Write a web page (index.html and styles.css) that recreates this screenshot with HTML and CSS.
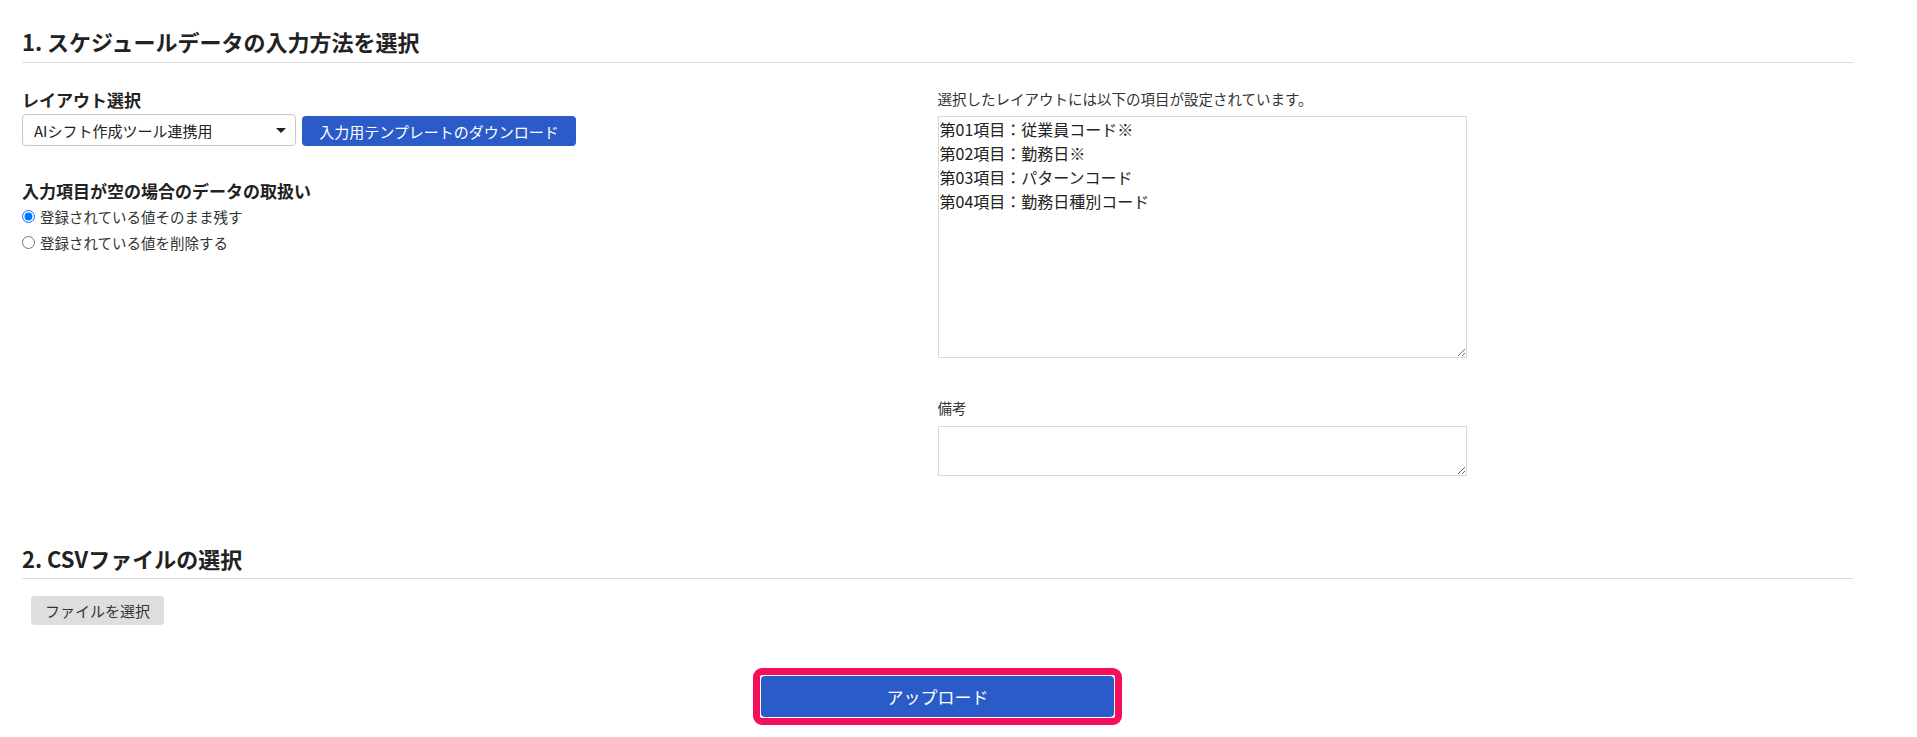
FILE: index.html
```html
<!DOCTYPE html>
<html lang="ja">
<head>
  <meta charset="UTF-8">
  <meta name="viewport" content="width=device-width, initial-scale=1.0">
  <title>スケジュールデータ取込</title>
  <link rel="stylesheet" href="styles.css">
</head>
<body>
  <main class="page">
    <h2 class="section-title">1. スケジュールデータの入力方法を選択</h2>
    <div class="cols">
      <div class="col">
        <div class="field-label">レイアウト選択</div>
        <div class="select-row">
          <div class="select-wrap">
            <select id="layout">
              <option>AIシフト作成ツール連携用</option>
            </select>
          </div>
          <button type="button" class="btn-blue btn-template">入力用テンプレートのダウンロード</button>
        </div>
        <div class="field-label sub-label">入力項目が空の場合のデータの取扱い</div>
        <label class="radio-row"><input type="radio" name="empty" checked>登録されている値そのまま残す</label>
        <label class="radio-row"><input type="radio" name="empty">登録されている値を削除する</label>
      </div>
      <div class="col">
        <div class="note">選択したレイアウトには以下の項目が設定されています。</div>
        <textarea class="items" readonly>第01項目：従業員コード※
第02項目：勤務日※
第03項目：パターンコード
第04項目：勤務日種別コード</textarea>
        <div class="note remarks-label">備考</div>
        <textarea class="remarks"></textarea>
      </div>
    </div>

    <h2 class="section-title second">2. CSVファイルの選択</h2>
    <label class="file-btn">ファイルを選択<input type="file" hidden></label>

    <div class="upload-row">
      <div class="highlight">
        <button type="button" class="btn-blue btn-upload">アップロード</button>
      </div>
    </div>
  </main>
</body>
</html>
```

FILE: styles.css
```css
body {
  margin: 0;
  font-family: "Noto Sans CJK JP", "Liberation Sans", sans-serif;
  color: #333;
  background-color: #fff;
}
.page {
  margin: 0 64px 0 22px;
  padding-top: 26px;
}
.section-title {
  margin: 0;
  font-size: 22px;
  line-height: 30px;
  font-weight: bold;
  color: #222;
  padding-bottom: 6px;
  border-bottom: 1px solid #ddd;
}
.section-title.second {
  margin-top: 67px;
  padding-bottom: 5px;
}
.cols {
  display: grid;
  grid-template-columns: 1fr 1fr;
  margin-top: 26px;
}
.field-label {
  font-size: 17px;
  line-height: 22px;
  font-weight: bold;
  color: #222;
  margin-bottom: 3px;
}
.sub-label {
  margin-top: 34px;
  margin-bottom: 1px;
}
.select-row {
  display: flex;
  align-items: flex-end;
  gap: 6px;
}
.select-wrap {
  position: relative;
  width: 274px;
}
.select-wrap::after {
  content: "";
  position: absolute;
  right: 10px;
  top: 14px;
  border-left: 5px solid transparent;
  border-right: 5px solid transparent;
  border-top: 5px solid #222;
  pointer-events: none;
}
.select-wrap select {
  -webkit-appearance: none;
  appearance: none;
  width: 100%;
  height: 32px;
  padding: 0 26px 0 11px;
  border: 1px solid #c8c8c8;
  border-radius: 4px;
  background: #fff;
  font-family: inherit;
  font-size: 15px;
  color: #222;
}
.btn-blue {
  background-color: #2a5bc8;
  color: #fff;
  border: none;
  border-radius: 4px;
  font-family: inherit;
  cursor: pointer;
}
.btn-template {
  width: 274px;
  height: 30px;
  padding: 0 12px;
  font-size: 15px;
}
.radio-row {
  display: flex;
  align-items: center;
  height: 26px;
  font-size: 14.5px;
  color: #333;
}
.radio-row input {
  width: 13px;
  height: 13px;
  margin: 0 5px 0 0;
}
.note {
  font-size: 14.5px;
  line-height: 20px;
  color: #333;
  margin-bottom: 7px;
}
.remarks-label {
  margin-top: 40px;
  margin-bottom: 8px;
}
.col textarea {
  display: block;
  box-sizing: border-box;
  width: 529px;
  border: 1px solid #d8d8d8;
  font-family: inherit;
  color: #222;
  resize: vertical;
}
.items {
  height: 242px;
  padding: 0 1px;
  font-size: 16px;
  line-height: 24px;
}
.remarks {
  height: 50px;
  padding: 2px;
  font-size: 14px;
}
.file-btn {
  display: inline-block;
  margin: 17px 0 0 9px;
  height: 29px;
  line-height: 29px;
  padding: 0 14px;
  background-color: #dedede;
  border-radius: 4px;
  font-size: 15px;
  color: #333;
  cursor: pointer;
}
.upload-row {
  display: flex;
  justify-content: center;
  margin-top: 43px;
}
.highlight {
  border: 7px solid #f50f5a;
  border-radius: 9px;
  padding: 1px;
}
.btn-upload {
  display: block;
  width: 353px;
  height: 41px;
  font-size: 17px;
}
```
